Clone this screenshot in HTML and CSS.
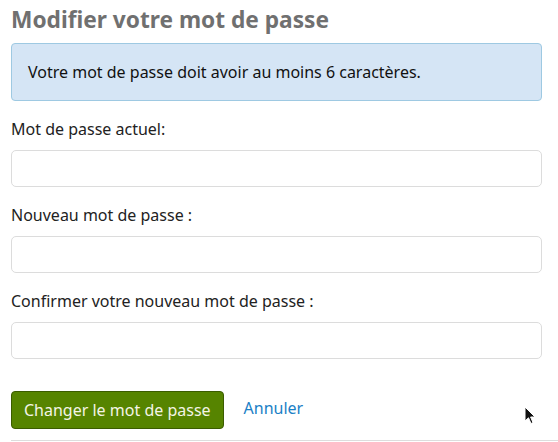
FILE: index.html
```html
<!DOCTYPE html>
<html lang="fr">
<head>
<meta charset="utf-8">
<title>Modifier votre mot de passe</title>
<link rel="stylesheet" href="styles.css">
</head>
<body>
<div class="page">
  <div class="content">
    <h2 class="title">Modifier votre mot de passe</h2>
    <div class="alert">Votre mot de passe doit avoir au moins 6 caractères.</div>
    <form class="form">
      <div class="field">
        <label class="label" for="cur">Mot de passe actuel:</label>
        <input class="input" id="cur" type="password">
      </div>
      <div class="field">
        <label class="label" for="new">Nouveau mot de passe :</label>
        <input class="input" id="new" type="password">
      </div>
      <div class="field">
        <label class="label" for="conf">Confirmer votre nouveau mot de passe :</label>
        <input class="input" id="conf" type="password">
      </div>
      <div class="actions">
        <button class="btn" type="button">Changer le mot de passe</button>
        <a class="link" href="#">Annuler</a>
      </div>
    </form>
  </div>
  <hr class="rule">
  <svg class="cursor" width="12" height="20" viewBox="0 0 12 20" aria-hidden="true">
    <path d="M1 1 L1 15 L4.5 11.8 L7 17.5 L9 16.6 L6.6 11 L11 11 Z" fill="#111" stroke="#fff" stroke-width="1" stroke-linejoin="round"/>
  </svg>
</div>
</body>
</html>
```
FILE: styles.css
```css
* { box-sizing: border-box; }
html, body { margin: 0; padding: 0; background: #fff; }
body {
  font-family: "Noto Sans", "Open Sans", sans-serif;
  color: #222;
  width: 558px;
  height: 442px;
  overflow: hidden;
}
.page {
  position: relative;
  padding-left: 11px;
  height: 442px;
}
.content { width: 531px; }
.title {
  margin: 0;
  padding-top: 6px;
  font-size: 22.7px;
  line-height: 28px;
  font-weight: 700;
  color: #707070;
}
.alert {
  margin-top: 9px;
  background: #d5e5f5;
  border: 1px solid #9ec9e2;
  border-radius: 4px;
  padding: 17px 16px;
  font-size: 16px;
  line-height: 22px;
  color: #111;
}
.form { margin: 0; }
.field {
  display: flex;
  flex-direction: column;
  margin-top: 17px;
}
.label {
  font-size: 16px;
  line-height: 22px;
  color: #222;
  margin-bottom: 10px;
}
.input {
  height: 37px;
  width: 100%;
  border: 1px solid #dcdcdc;
  border-radius: 5px;
  background: #fff;
  margin: 0;
  font: inherit;
}
.actions {
  display: flex;
  align-items: center;
  gap: 20px;
  margin-top: 32px;
}
.btn {
  height: 38px;
  padding: 0 12px;
  background: #568400;
  border: 1px solid #3b5c00;
  border-radius: 4px;
  color: #f4f4e6;
  font-family: "Noto Sans", "Open Sans", sans-serif;
  font-size: 16px;
  line-height: 22px;
  margin: 0;
}
.link {
  color: #1a80c6;
  text-decoration: none;
  font-size: 16px;
  line-height: 22px;
  position: relative;
  top: -2px;
}
.rule {
  margin: 11px 0 0 0;
  border: 0;
  border-top: 1px solid #dddddd;
  height: 0;
}
.cursor {
  position: absolute;
  left: 524px;
  top: 406px;
}
```
